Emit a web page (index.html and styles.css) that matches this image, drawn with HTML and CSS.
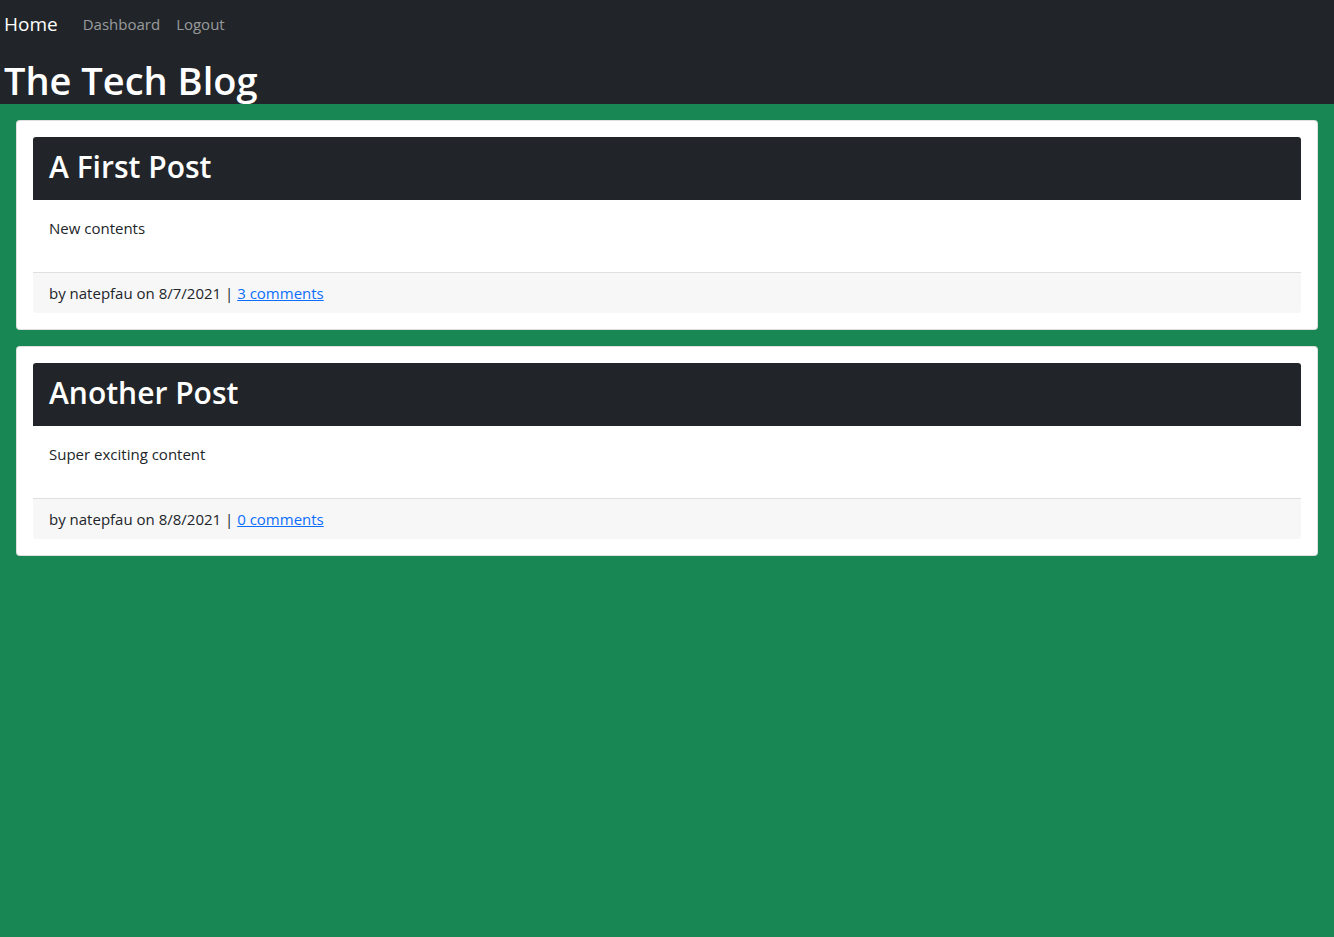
FILE: index.html
```html
<!DOCTYPE html>
<html lang="en">
<head>
<meta charset="utf-8">
<title>The Tech Blog</title>
<link rel="stylesheet" href="styles.css">
</head>
<body>
<header class="site-header">
  <nav class="navbar">
    <a class="brand" href="#">Home</a>
    <a class="nav-link" href="#">Dashboard</a>
    <a class="nav-link" href="#">Logout</a>
  </nav>
  <h1 class="site-title">The Tech Blog</h1>
</header>
<main class="main">
  <article class="card">
    <div class="card-header"><h2 class="post-title">A First Post</h2></div>
    <div class="card-body"><p class="post-text">New contents</p></div>
    <div class="card-footer">by natepfau on 8/7/2021 | <a class="comments" href="#">3 comments</a></div>
  </article>
  <article class="card">
    <div class="card-header"><h2 class="post-title">Another Post</h2></div>
    <div class="card-body"><p class="post-text">Super exciting content</p></div>
    <div class="card-footer">by natepfau on 8/8/2021 | <a class="comments" href="#">0 comments</a></div>
  </article>
</main>
</body>
</html>
```
FILE: styles.css
```css
* { box-sizing: border-box; }
html, body {
  margin: 0;
}
body {
  font-family: "Open Sans", "Noto Sans", sans-serif;
  font-size: 15px;
  line-height: 24px;
  color: #212529;
  background: #198754;
  min-height: 937px;
}
.site-header {
  background: #212529;
  padding: 0 4px;
}
.navbar {
  display: flex;
  align-items: center;
  padding: 4px 0 12px;
}
.brand {
  font-size: 19px;
  line-height: 30px;
  padding: 5px 0;
  margin-right: 17px;
  color: #fff;
  text-decoration: none;
}
.nav-link {
  padding: 8px;
  color: rgba(255, 255, 255, 0.55);
  text-decoration: none;
}
.site-title {
  margin: 0;
  font-size: 38px;
  line-height: 48px;
  font-weight: 600;
  color: #fff;
}
.main {
  padding: 16px;
  display: flex;
  flex-direction: column;
  gap: 16px;
}
.card {
  background: #fff;
  border: 1px solid rgba(0, 0, 0, 0.125);
  border-radius: 4px;
  padding: 16px;
}
.card-header {
  background: #212529;
  padding: 11px 16px 14px;
  height: 63px;
  border-radius: 3px 3px 0 0;
}
.post-title {
  margin: 0;
  font-size: 30px;
  line-height: 38px;
  font-weight: 600;
  color: #fff;
}
.card-body {
  padding: 16px;
}
.post-text {
  margin: 0 0 16px;
  font-size: 15px;
}
.card-footer {
  background: #f7f7f7;
  border-top: 1px solid #dfdfdf;
  padding: 8px 16px;
  border-radius: 0 0 3px 3px;
}
.comments {
  color: #0d6efd;
  text-decoration: underline;
}
```
